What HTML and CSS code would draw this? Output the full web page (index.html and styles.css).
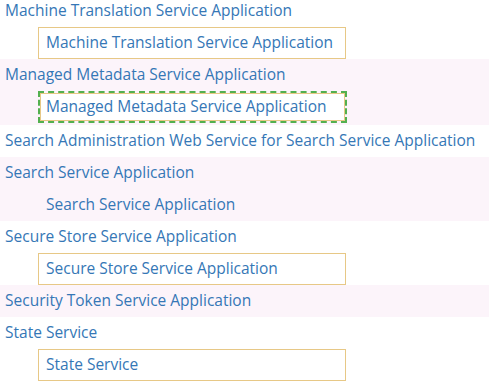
FILE: index.html
```html
<html>
    <head>
        <link rel="stylesheet" href="styles.css">
    </head>
    <body>
        <div id="list">
            <div class="group">
                <div class="title">Machine Translation Service Application</div>
                <div class="child"><div class="box">Machine Translation Service Application</div></div>
            </div>
            <div class="group alt">
                <div class="title">Managed Metadata Service Application</div>
                <div class="child"><div class="box focus">Managed Metadata Service Application</div></div>
            </div>
            <div class="group">
                <div class="title">Search Administration Web Service for Search Service Application</div>
            </div>
            <div class="group alt">
                <div class="title">Search Service Application</div>
                <div class="child"><div class="box plain">Search Service Application</div></div>
            </div>
            <div class="group">
                <div class="title">Secure Store Service Application</div>
                <div class="child"><div class="box">Secure Store Service Application</div></div>
            </div>
            <div class="group alt">
                <div class="title">Security Token Service Application</div>
            </div>
            <div class="group">
                <div class="title">State Service</div>
                <div class="child"><div class="box">State Service</div></div>
            </div>
        </div>
    </body>
</html>
```

FILE: styles.css
```css
*{
    padding:0;
    margin:0;
    box-sizing:border-box;
}
body{
    background-color:white;
    font-family:"Open Sans", "Noto Sans", sans-serif;
    font-size:15.5px;
    color:#3577b6;
    overflow:hidden;
}
#list{
    margin-top:-5px;
}
.group{
    background-color:white;
}
.alt{
    background-color:#fcf4fa;
}
.title{
    height:32px;
    line-height:31px;
    padding-left:5px;
    white-space:nowrap;
}
.child{
    height:32px;
    padding-left:38px;
}
.box{
    width:308px;
    height:32px;
    line-height:29px;
    padding-left:7px;
    border:1px solid #e7c886;
    background-color:white;
    white-space:nowrap;
}
.focus{
    width:305px;
    height:28px;
    line-height:25px;
    margin:2px 0 0 2px;
    padding-left:5px;
    outline:2px dashed #53b04f;
}
.plain{
    border-color:transparent;
    background-color:transparent;
}
```
